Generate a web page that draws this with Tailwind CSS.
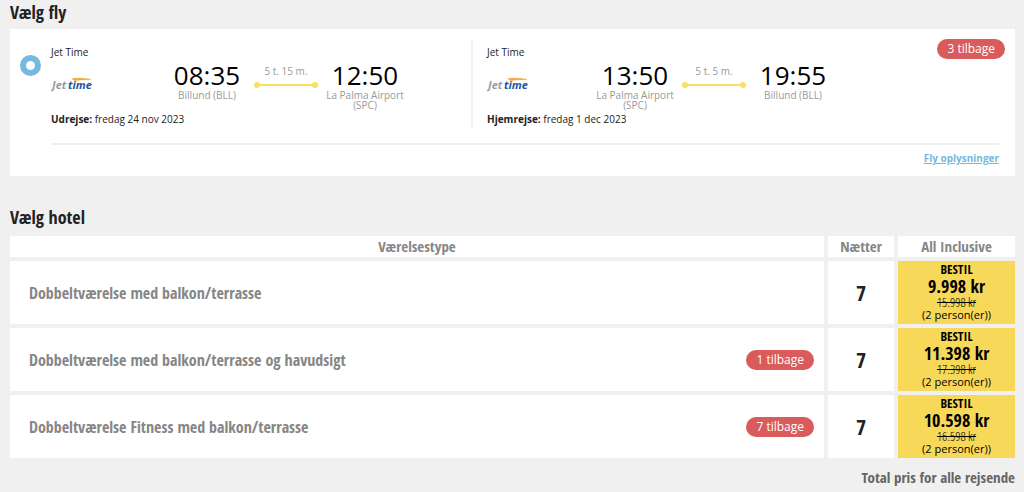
<!DOCTYPE html>
<html lang="da">
<head>
<meta charset="utf-8">
<meta name="viewport" content="width=device-width, initial-scale=1">
<title>Vælg fly og hotel</title>
<script src="https://cdn.jsdelivr.net/npm/@tailwindcss/browser@4"></script>
</head>
<body class="bg-[#f0f0f0] pl-[10px] pr-[9px] font-['Open_Sans','Noto_Sans',sans-serif] text-[#222]">
<svg class="hidden">
  <symbol id="jettime" viewBox="0 0 42 16">
    <text x="1" y="13" font-family="Open Sans, sans-serif" font-size="11" font-style="italic" font-weight="700" fill="#9a9ca1">Jet</text>
    <text x="17" y="13" font-family="Open Sans, sans-serif" font-size="11" font-style="italic" font-weight="700" fill="#2553a4">time</text>
    <path d="M21 2.500C27 2 34 2 40 3.400C34 3.600 29 3.800 23 4.500z" fill="#f3a43b" stroke="#f3a43b" stroke-width=".5"/>
  </symbol>
  <symbol id="leg" viewBox="0 0 64 6">
    <path d="M3 3h58" stroke="#fbdf64" stroke-width="2"/>
    <circle cx="3" cy="3" r="3" fill="#fbdf64"/><circle cx="61" cy="3" r="3" fill="#fbdf64"/>
  </symbol>
</svg>
<main>
  <h2 class="h-[29px] font-['Open_Sans_Condensed','Noto_Sans_Condensed',sans-serif] text-lg leading-[25px] font-bold">Vælg fly</h2>
  <section class="flex gap-[10px] bg-white pt-[11px] pr-4 pb-[10px] pl-[10px]">
    <input type="radio" name="fly" checked aria-label="Jet Time 08:35" class="mt-[15px] size-[21px] shrink-0 appearance-none rounded-full border-[6px] border-[#74b9e0] bg-white">
    <div class="grow">
      <div class="grid grid-cols-[422fr_526fr]">
        <article class="h-[88px] border-r-2 border-[#f0f0f0]">
          <p class="pt-1 text-[10px] leading-4">Jet Time</p>
          <div class="flex h-[51px]">
            <svg class="mt-4 h-4 w-[42px]" role="img" aria-label="Jettime"><use href="#jettime"/></svg>
            <div class="ml-[72px] w-[84px] text-center text-[10px] leading-[10px] text-[#999]"><p class="text-[26px] leading-[30px] text-black">08:35</p>Billund (BLL)</div>
            <div class="w-[74px] pt-1 text-center text-[10px] leading-[14px] text-[#999]">5 t. 15 m.<svg class="mx-auto mt-1 h-[6px] w-16"><use href="#leg"/></svg></div>
            <div class="w-[84px] text-center text-[10px] leading-[10px] text-[#999]"><p class="text-[26px] leading-[30px] text-black">12:50</p>La Palma Airport (SPC)</div>
          </div>
          <p class="text-[10px] leading-4"><b>Udrejse:</b> fredag 24 nov 2023</p>
        </article>
        <article class="relative h-[88px] pl-[14px]">
          <p class="pt-1 text-[10px] leading-4">Jet Time</p>
          <div class="flex h-[51px]">
            <svg class="mt-4 h-4 w-[42px]" role="img" aria-label="Jettime"><use href="#jettime"/></svg>
            <div class="ml-16 w-[84px] text-center text-[10px] leading-[10px] text-[#999]"><p class="text-[26px] leading-[30px] text-black">13:50</p>La Palma Airport (SPC)</div>
            <div class="w-[74px] pt-1 text-center text-[10px] leading-[14px] text-[#999]">5 t. 5 m.<svg class="mx-auto mt-1 h-[6px] w-16"><use href="#leg"/></svg></div>
            <div class="w-[84px] text-center text-[10px] leading-[10px] text-[#999]"><p class="text-[26px] leading-[30px] text-black">19:55</p>Billund (BLL)</div>
          </div>
          <p class="text-[10px] leading-4"><b>Hjemrejse:</b> fredag 1 dec 2023</p>
          <span class="absolute -top-px -right-[6px] rounded-full bg-[#d95b5b] px-[10px] text-xs leading-5 text-white">3 tilbage</span>
        </article>
      </div>
      <div class="mt-[15px] border-t-2 border-[#f0f0f0] pt-[5px] text-right text-[10px] leading-4"><a href="#" class="font-bold text-[#74b9e0] underline">Fly oplysninger</a></div>
    </div>
  </section>
  <div class="font-['Open_Sans_Condensed','Noto_Sans_Condensed',sans-serif] font-bold">
    <h2 class="mt-7 text-lg leading-[26px]">Vælg hotel</h2>
    <div class="-mx-1">
      <table class="mt-[2px] w-full table-fixed border-separate border-spacing-1">
        <colgroup><col><col class="w-[66px]"><col class="w-[117px]"></colgroup>
        <thead class="text-[15px] leading-[21px] text-[#868686]">
          <tr><th class="bg-white p-0">Værelsestype</th><th class="bg-white p-0">Nætter</th><th class="bg-white p-0">All Inclusive</th></tr>
        </thead>
        <tbody>
          <tr>
            <td class="bg-white py-0 pr-[10px] pl-[19px] text-base text-[#868686]">Dobbeltværelse med balkon/terrasse</td>
            <td class="bg-white p-0 text-center text-[22px]">7</td>
            <td class="bg-[#f7d859] p-0"><button class="block h-[63px] w-full pb-[3px] text-center text-black"><span class="block text-[13px] leading-4">BESTIL</span><span class="block text-lg leading-[18px]">9.998 kr</span><s class="block font-['Open_Sans_Condensed_Light','Open_Sans_Condensed'] text-[13px] leading-[14px] font-light">15.998 kr</s><span class="block font-['Open_Sans'] text-[11px] leading-3 font-normal">(2 person(er))</span></button></td>
          </tr>
          <tr>
            <td class="bg-white py-0 pr-[10px] pl-[19px] text-base text-[#868686]"><div class="flex items-center justify-between">Dobbeltværelse med balkon/terrasse og havudsigt<span class="rounded-full bg-[#d95b5b] px-[10px] font-['Open_Sans'] text-xs leading-5 font-normal text-white">1 tilbage</span></div></td>
            <td class="bg-white p-0 text-center text-[22px]">7</td>
            <td class="bg-[#f7d859] p-0"><button class="block h-[63px] w-full pb-[3px] text-center text-black"><span class="block text-[13px] leading-4">BESTIL</span><span class="block text-lg leading-[18px]">11.398 kr</span><s class="block font-['Open_Sans_Condensed_Light','Open_Sans_Condensed'] text-[13px] leading-[14px] font-light">17.398 kr</s><span class="block font-['Open_Sans'] text-[11px] leading-3 font-normal">(2 person(er))</span></button></td>
          </tr>
          <tr>
            <td class="bg-white py-0 pr-[10px] pl-[19px] text-base text-[#868686]"><div class="flex items-center justify-between">Dobbeltværelse Fitness med balkon/terrasse<span class="rounded-full bg-[#d95b5b] px-[10px] font-['Open_Sans'] text-xs leading-5 font-normal text-white">7 tilbage</span></div></td>
            <td class="bg-white p-0 text-center text-[22px]">7</td>
            <td class="bg-[#f7d859] p-0"><button class="block h-[63px] w-full pb-[3px] text-center text-black"><span class="block text-[13px] leading-4">BESTIL</span><span class="block text-lg leading-[18px]">10.598 kr</span><s class="block font-['Open_Sans_Condensed_Light','Open_Sans_Condensed'] text-[13px] leading-[14px] font-light">16.598 kr</s><span class="block font-['Open_Sans'] text-[11px] leading-3 font-normal">(2 person(er))</span></button></td>
          </tr>
        </tbody>
      </table>
    </div>
    <p class="mt-[3px] text-right text-[15px] leading-6 text-[#666]">Total pris for alle rejsende</p>
  </div>
</main>
</body>
</html>
